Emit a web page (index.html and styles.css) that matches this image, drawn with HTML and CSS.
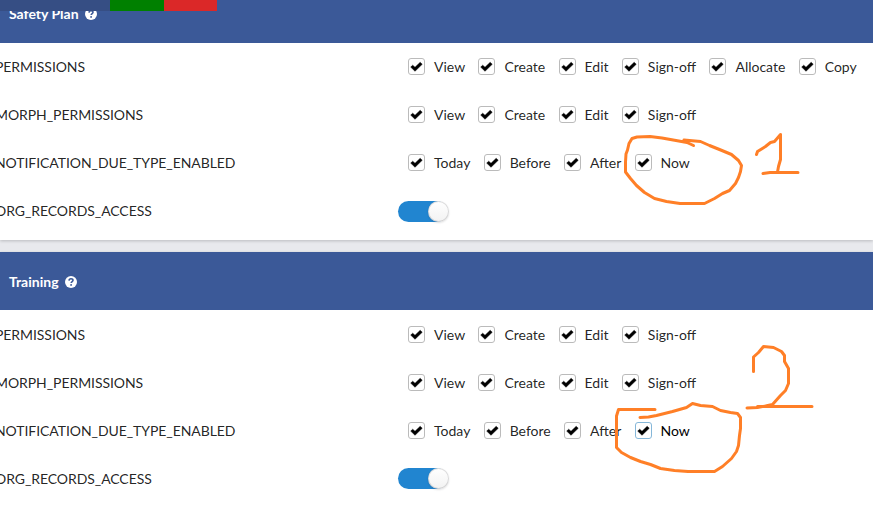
FILE: index.html
```
<!DOCTYPE html>
<html lang="en">
<head>
<meta charset="utf-8">
<title>Permissions</title>
<link rel="stylesheet" href="styles.css">
</head>
<body>
<svg class="defs" width="0" height="0">
  <symbol id="tick" viewBox="1 1 15 15"><path d="M2.7 9.1 L4.7 7.2 L7 9.3 L12.2 4.3 L14.2 6.3 L7 13.3Z" fill="#000" stroke="#000" stroke-width=".5" stroke-linejoin="round"/></symbol>
  <symbol id="help" viewBox="0 0 12 12"><circle cx="6" cy="6" r="6" fill="#fff"/><path d="M4 4.6C4.1 3.3 5 2.8 6 2.8c1.2 0 2 .6 2 1.5 0 1.3-1.8 1.2-1.8 2.6" fill="none" stroke="#3b5998" stroke-width="1.6"/><circle cx="6.1" cy="8.9" r=".95" fill="#3b5998"/></symbol>
</svg>
<main class="page">
  <section class="card first">
    <header class="head"><span>Safety Plan</span><svg class="help"><use href="#help"/></svg></header>
    <div class="row"><div class="name">PERMISSIONS</div><div class="fields">
      <label class="check"><svg class="box"><use href="#tick"/></svg>View</label>
      <label class="check"><svg class="box"><use href="#tick"/></svg>Create</label>
      <label class="check"><svg class="box"><use href="#tick"/></svg>Edit</label>
      <label class="check"><svg class="box"><use href="#tick"/></svg>Sign-off</label>
      <label class="check"><svg class="box"><use href="#tick"/></svg>Allocate</label>
      <label class="check"><svg class="box"><use href="#tick"/></svg>Copy</label>
    </div></div>
    <div class="row"><div class="name">MORPH_PERMISSIONS</div><div class="fields">
      <label class="check"><svg class="box"><use href="#tick"/></svg>View</label>
      <label class="check"><svg class="box"><use href="#tick"/></svg>Create</label>
      <label class="check"><svg class="box"><use href="#tick"/></svg>Edit</label>
      <label class="check"><svg class="box"><use href="#tick"/></svg>Sign-off</label>
    </div></div>
    <div class="row"><div class="name">NOTIFICATION_DUE_TYPE_ENABLED</div><div class="fields">
      <label class="check"><svg class="box"><use href="#tick"/></svg>Today</label>
      <label class="check"><svg class="box"><use href="#tick"/></svg>Before</label>
      <label class="check"><svg class="box"><use href="#tick"/></svg>After</label>
      <label class="check"><svg class="box"><use href="#tick"/></svg>Now</label>
    </div></div>
    <div class="row"><div class="name">ORG_RECORDS_ACCESS</div><div class="toggle"><span class="knob"></span></div></div>
  </section>
  <section class="card second">
    <header class="head"><span>Training</span><svg class="help"><use href="#help"/></svg></header>
    <div class="row"><div class="name">PERMISSIONS</div><div class="fields">
      <label class="check"><svg class="box"><use href="#tick"/></svg>View</label>
      <label class="check"><svg class="box"><use href="#tick"/></svg>Create</label>
      <label class="check"><svg class="box"><use href="#tick"/></svg>Edit</label>
      <label class="check"><svg class="box"><use href="#tick"/></svg>Sign-off</label>
    </div></div>
    <div class="row"><div class="name">MORPH_PERMISSIONS</div><div class="fields">
      <label class="check"><svg class="box"><use href="#tick"/></svg>View</label>
      <label class="check"><svg class="box"><use href="#tick"/></svg>Create</label>
      <label class="check"><svg class="box"><use href="#tick"/></svg>Edit</label>
      <label class="check"><svg class="box"><use href="#tick"/></svg>Sign-off</label>
    </div></div>
    <div class="row"><div class="name">NOTIFICATION_DUE_TYPE_ENABLED</div><div class="fields">
      <label class="check"><svg class="box"><use href="#tick"/></svg>Today</label>
      <label class="check"><svg class="box"><use href="#tick"/></svg>Before</label>
      <label class="check"><svg class="box"><use href="#tick"/></svg>After</label>
      <label class="check"><svg class="box focus"><use href="#tick"/></svg><span class="active">Now</span></label>
    </div></div>
    <div class="row"><div class="name">ORG_RECORDS_ACCESS</div><div class="toggle"><span class="knob"></span></div></div>
  </section>
</main>
<div class="topbar"><i class="navy"></i><i class="green"></i><i class="red"></i></div>
<svg class="ink" viewBox="0 0 875 509" fill="none" stroke="#ff7f27" stroke-width="3" stroke-linecap="round" stroke-linejoin="round">
  <path d="M693.500 145.500L687 142.500L676 140.500L662 138L650 136.500L637 137L632 138.500L629 143.500L627.500 150L626 154L625.500 162V172L630.500 178.500L636.500 185.500L644.500 192.500L654.500 198.500L666.500 201.500L680 203.500H704.500L714.500 198.500L722.500 193.500L729.500 190.500L735.500 183.500L738.500 177.500L740.500 171.500L741.500 165.500L738.500 160.500L731.500 154.500L719.500 149.500L709.500 145.500L700.500 141.500L684 140"/>
  <path d="M756.500 154.500L757.500 151.500L765.500 146.500L770.500 142.500L774.500 141.500L780.500 134.500V159.500L778.500 166.500L777.500 172M763 173.500L770 172.500H798"/>
  <path d="M655 409.500H618.500L616.500 416V447.500L621.500 452.500L630.500 457.500L640.500 461.500L650.500 464.500L660.500 468.500L674.500 470.500L688 471.500H714.500L722.500 466.500L731.500 458.500L736.500 451.500L738.500 445.500L739.500 435.500L740.500 428.500V417.500L737.500 413.500L730.500 412.500L720.500 410.500L712.500 406.500L700.500 405.500L692.500 403.500L686.500 407.500L672.500 411.500L656.500 415.500L648.500 417L640 417.500"/>
  <path d="M753.500 371.500V357L758.500 352.500L763.500 346.500L773.500 347.500L781.500 351.500L784.500 355.500V361.500L788.500 368.500V383.500L785.500 390.500L780.500 395.500L772.500 404.500L765.500 406L757.500 407.500L747 408M757.500 406.500H812"/>
</svg>
</body>
</html>
```
FILE: styles.css
```
* { box-sizing: border-box; }
body { margin: 0; width: 875px; height: 509px; overflow: hidden; background: #fff; font: 14px/20px Lato, sans-serif; color: rgba(0,0,0,.87); }
.defs { position: absolute; }
.page { width: 873px; height: 509px; overflow: hidden; background: #e8e9ed; }
.card { background: #fff; box-shadow: 0 1px 3px rgba(0,0,0,.2); }
.first { height: 240px; }
.second { margin-top: 12px; height: 270px; }
.head { display: flex; align-items: center; gap: 6px; height: 58px; padding: 2px 0 0 9px; background: #3b5998; color: #fff; font-weight: 700; }
.first .head { height: 43px; padding: 0 0 15px 9px; }
.help { width: 12px; height: 12px; }
.row { display: flex; align-items: center; height: 48px; }
.second .head + .row { margin-top: 1px; }
.name { width: 413px; margin-left: -5px; white-space: nowrap; letter-spacing: -.07px; }
.fields { display: flex; gap: 13.3px; }
.check { display: flex; align-items: center; gap: 9px; white-space: nowrap; }
.box { width: 17px; height: 17px; margin-top: -1px; border: 1px solid #bbb; border-radius: 3px; background: #fff; }
.focus { border-color: #85b7d9; }
.active { color: #000; }
.toggle { position: relative; width: 49px; height: 21px; margin-left: -10px; border-radius: 11px; background: #2185d0; }
.second .toggle { margin-top: -2px; }
.knob { position: absolute; right: -2px; top: 0; width: 21px; height: 21px; border-radius: 50%; background: linear-gradient(#fff, #f2f2f2); box-shadow: 0 1px 2px rgba(34,36,38,.15), 0 0 0 1px rgba(34,36,38,.15) inset; }
.topbar { position: absolute; left: 0; top: 0; display: flex; height: 11px; }
.navy { width: 110px; background: #364e84; }
.green { width: 54px; background: #008000; }
.red { width: 53px; background: #db2828; }
.ink { position: absolute; left: 0; top: 0; width: 875px; height: 509px; }
```
